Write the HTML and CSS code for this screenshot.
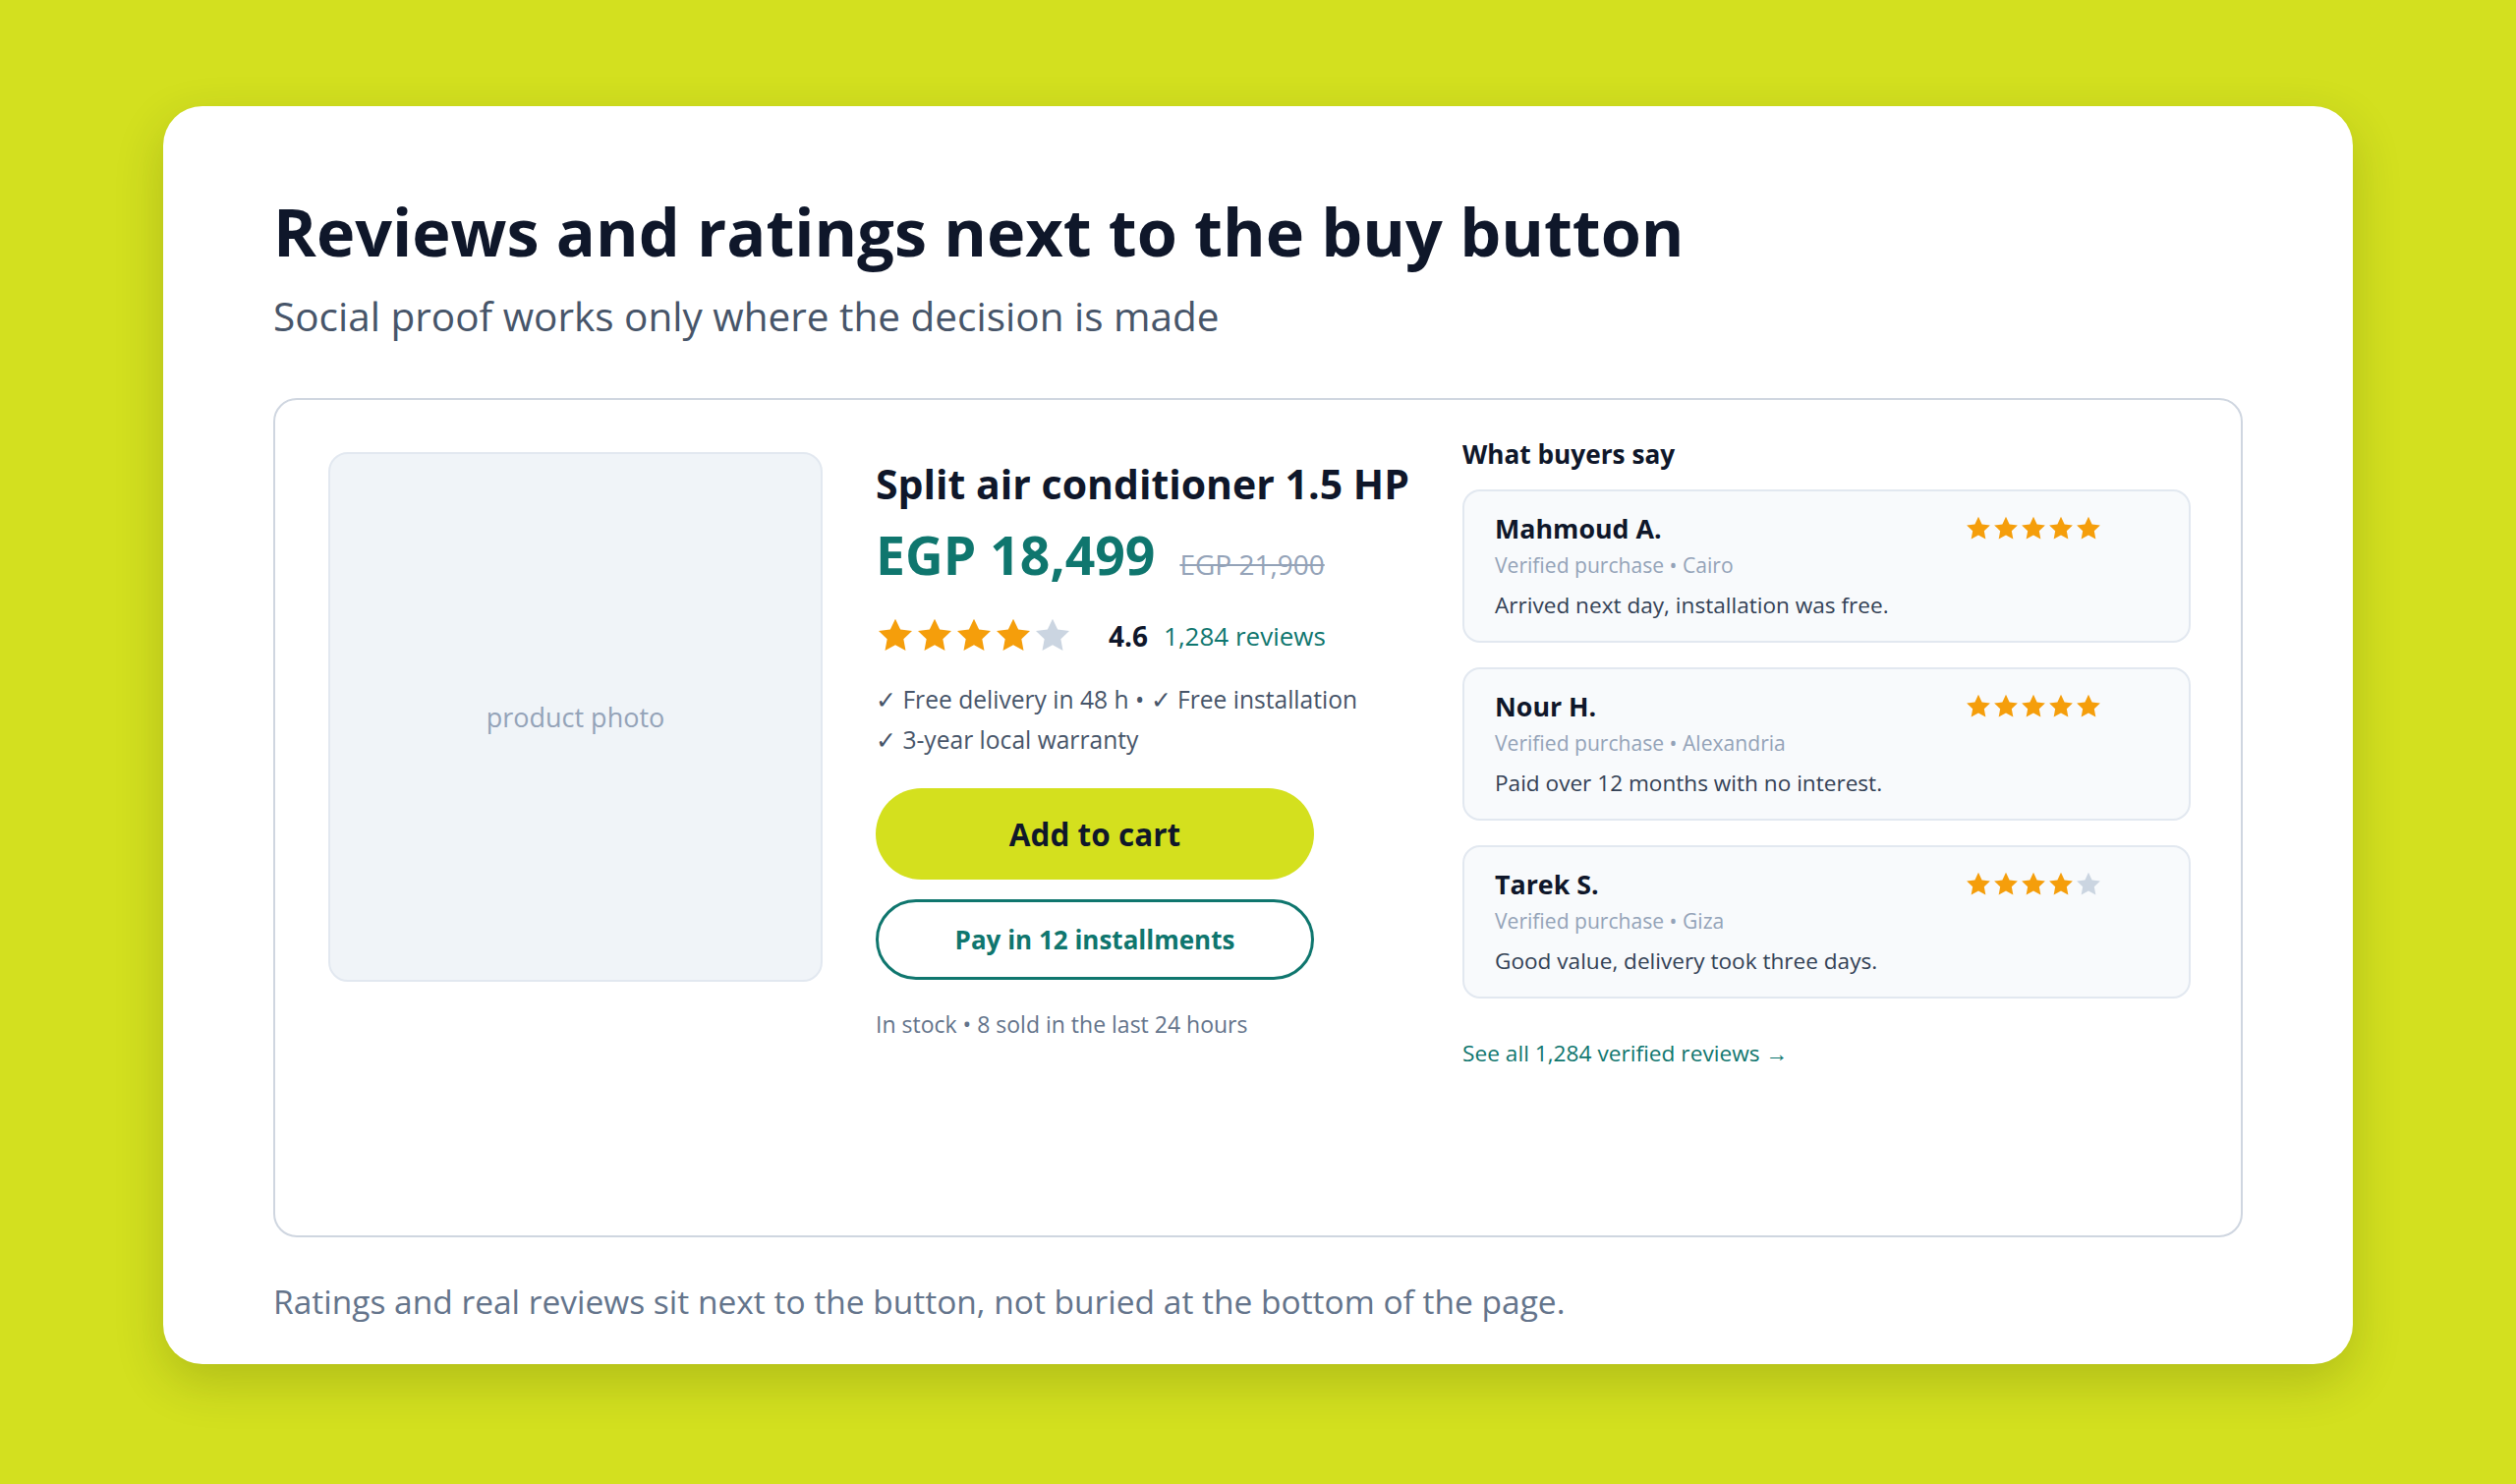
FILE: index.html
```html
<!DOCTYPE html>
<html lang="en">
<head>
<meta charset="utf-8">
<title>Reviews and ratings next to the buy button</title>
<link rel="stylesheet" href="styles.css">
</head>
<body>
<svg width="0" height="0" class="defs">
  <defs>
    <symbol id="star" viewBox="0 0 24 24"><polygon points="12,1.6 15.1,8.1 22.2,9 17,13.9 18.3,21 12,17.6 5.7,21 7,13.9 1.8,9 8.9,8.1"/></symbol>
  </defs>
</svg>
<main class="card">
  <h1 class="title">Reviews and ratings next to the buy button</h1>
  <p class="subtitle">Social proof works only where the decision is made</p>

  <section class="product">
    <div class="photo">product photo</div>

    <div class="info">
      <h2 class="pname">Split air conditioner 1.5 HP</h2>
      <div class="prices">
        <span class="price">EGP 18,499</span>
        <span class="old">EGP 21,900</span>
      </div>
      <div class="rating">
        <span class="stars big">
          <svg class="on"><use href="#star"/></svg><svg class="on"><use href="#star"/></svg><svg class="on"><use href="#star"/></svg><svg class="on"><use href="#star"/></svg><svg class="off"><use href="#star"/></svg>
        </span>
        <span class="score">4.6</span>
        <a class="count">1,284 reviews</a>
      </div>
      <p class="features">✓ Free delivery in 48 h • ✓ Free installation<br>✓ 3-year local warranty</p>
      <button class="btn primary">Add to cart</button>
      <button class="btn outline">Pay in 12 installments</button>
      <p class="stock">In stock • 8 sold in the last 24 hours</p>
    </div>

    <div class="reviews">
      <h3 class="rhead">What buyers say</h3>
      <div class="rcard">
        <div class="rtop">
          <span class="rname">Mahmoud A.</span>
          <span class="stars small"><svg class="on"><use href="#star"/></svg><svg class="on"><use href="#star"/></svg><svg class="on"><use href="#star"/></svg><svg class="on"><use href="#star"/></svg><svg class="on"><use href="#star"/></svg></span>
        </div>
        <div class="rmeta">Verified purchase • Cairo</div>
        <div class="rbody">Arrived next day, installation was free.</div>
      </div>
      <div class="rcard">
        <div class="rtop">
          <span class="rname">Nour H.</span>
          <span class="stars small"><svg class="on"><use href="#star"/></svg><svg class="on"><use href="#star"/></svg><svg class="on"><use href="#star"/></svg><svg class="on"><use href="#star"/></svg><svg class="on"><use href="#star"/></svg></span>
        </div>
        <div class="rmeta">Verified purchase • Alexandria</div>
        <div class="rbody">Paid over 12 months with no interest.</div>
      </div>
      <div class="rcard">
        <div class="rtop">
          <span class="rname">Tarek S.</span>
          <span class="stars small"><svg class="on"><use href="#star"/></svg><svg class="on"><use href="#star"/></svg><svg class="on"><use href="#star"/></svg><svg class="on"><use href="#star"/></svg><svg class="off"><use href="#star"/></svg></span>
        </div>
        <div class="rmeta">Verified purchase • Giza</div>
        <div class="rbody">Good value, delivery took three days.</div>
      </div>
      <a class="seeall">See all 1,284 verified reviews →</a>
    </div>
  </section>

  <p class="note">Ratings and real reviews sit next to the button, not buried at the bottom of the page.</p>
</main>
</body>
</html>
```

FILE: styles.css
```css
* { box-sizing: border-box; }
html, body { margin: 0; }
body {
  background: #d3e01f;
  font-family: "Open Sans", "Noto Sans", sans-serif;
  color: #0f172a;
  padding-top: 108px;
  min-height: 1510px;
}
.defs { position: absolute; }
.card {
  width: 2228px;
  height: 1280px;
  margin: 0 auto;
  background: #fff;
  border-radius: 40px;
  padding: 86px 112px 0;
  box-shadow: 0 18px 50px rgba(40, 50, 0, 0.2);
}
.title {
  margin: 0;
  font-size: 66.5px;
  line-height: 82px;
  font-weight: 700;
  color: #0f172a;
}
.subtitle {
  margin: 20px 0 0;
  font-size: 40.5px;
  line-height: 52px;
  color: #475569;
}
.product {
  margin-top: 57px;
  height: 854px;
  border: 2px solid #cfd6e0;
  border-radius: 24px;
  display: grid;
  grid-template-columns: 503px 543px 1fr;
  column-gap: 54px;
  align-items: start;
  padding: 0 51px 0 54px;
}
.photo {
  margin-top: 53px;
  height: 539px;
  background: #f0f4f8;
  border: 2px solid #e2e8f0;
  border-radius: 20px;
  display: flex;
  align-items: center;
  justify-content: center;
  font-size: 27px;
  color: #94a3b8;
}
.info { margin-top: 60px; display: flex; flex-direction: column; align-items: flex-start; }
.pname {
  margin: 0;
  font-size: 41px;
  line-height: 50px;
  font-weight: 700;
  color: #0f172a;
  white-space: nowrap;
}
.prices { margin-top: 15px; display: flex; align-items: baseline; gap: 25px; }
.price { font-size: 53.5px; line-height: 66px; font-weight: 700; color: #0f766e; }
.old { font-size: 28px; color: #94a3b8; text-decoration: line-through; }
.rating { margin-top: 29px; display: flex; align-items: center; height: 40px; }
.stars { display: inline-flex; }
.stars svg.on { fill: #f59e0b; }
.stars svg.off { fill: #cbd5e1; }
.stars.big svg { width: 40px; height: 40px; }
.stars.small svg { width: 28px; height: 28px; }
.score { margin-left: 37px; font-size: 28px; font-weight: 700; color: #0f172a; }
.count { margin-left: 16px; font-size: 26px; color: #0f766e; }
.features {
  margin: 24px 0 0;
  font-size: 24.6px;
  line-height: 41px;
  color: #475569;
}
.btn {
  font-family: inherit;
  font-weight: 700;
  border-radius: 999px;
  width: 446px;
  cursor: pointer;
}
.primary {
  margin-top: 29px;
  height: 93px;
  border: 0;
  background: #d4e01e;
  color: #0f172a;
  font-size: 31.5px;
}
.outline {
  margin-top: 20px;
  height: 82px;
  border: 3px solid #0f766e;
  background: #fff;
  color: #0f766e;
  font-size: 26px;
}
.stock {
  margin: 29px 0 0;
  font-size: 23px;
  line-height: 32px;
  color: #64748b;
}
.reviews { margin-top: 37px; display: flex; flex-direction: column; }
.rhead {
  margin: 0;
  font-size: 26.2px;
  line-height: 36px;
  font-weight: 700;
  color: #0f172a;
}
.rcard {
  margin-top: 18px;
  background: #f8fafc;
  border: 2px solid #e2e8f0;
  border-radius: 18px;
  padding: 21px 32px 20px 31px;
}
.rcard + .rcard { margin-top: 25px; }
.rtop { display: flex; justify-content: space-between; align-items: center; }
.rtop .stars { margin-right: 56px; }
.rname { font-size: 26.8px; line-height: 34px; font-weight: 700; color: #0f172a; }
.rmeta { margin-top: 5px; font-size: 21.1px; line-height: 30px; color: #94a3b8; }
.rbody { margin-top: 10px; font-size: 22.6px; line-height: 32px; color: #334155; }
.seeall {
  margin-top: 40px;
  font-size: 22.7px;
  line-height: 32px;
  color: #0f766e;
}
.note {
  margin: 42px 0 0;
  font-size: 33.5px;
  line-height: 46px;
  color: #64748b;
}
```
